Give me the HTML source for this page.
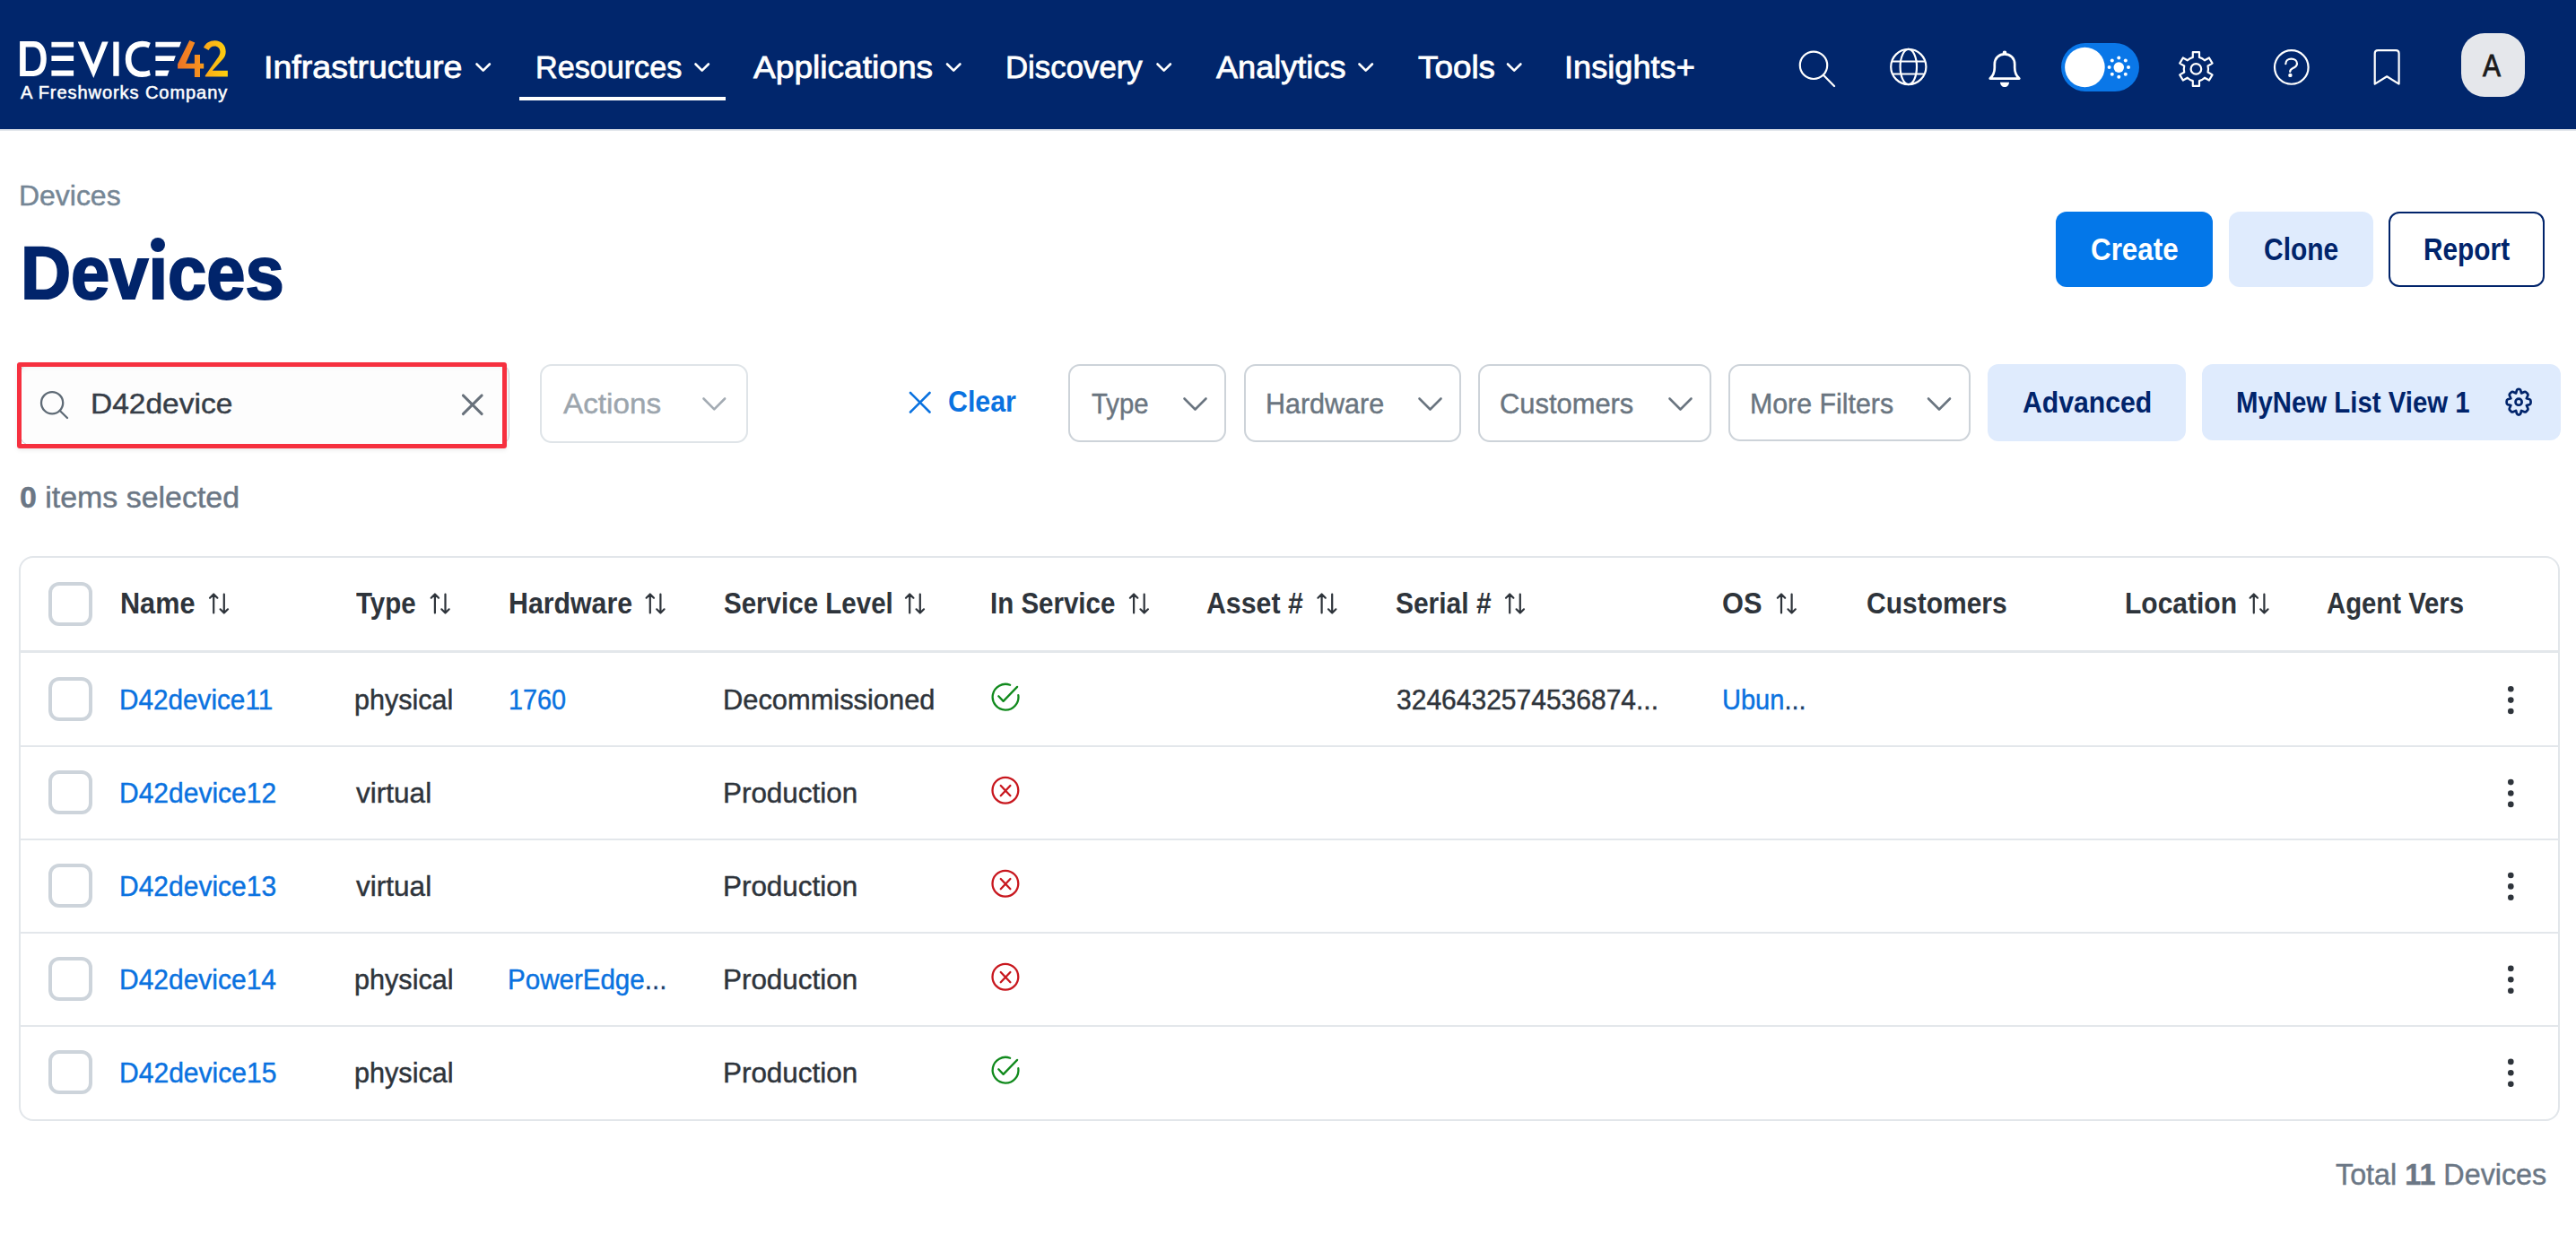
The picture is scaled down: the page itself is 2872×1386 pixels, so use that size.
<!DOCTYPE html>
<html><head><meta charset="utf-8"><title>Devices</title>
<style>
html,body{margin:0;padding:0;}
body{width:2872px;height:1386px;position:relative;overflow:hidden;background:#fff;font-family:"Liberation Sans",sans-serif;}
.t{position:absolute;white-space:nowrap;line-height:1;transform-origin:0 0;font-family:"Liberation Sans",sans-serif;}
.a{position:absolute;box-sizing:border-box;}
svg.a{overflow:visible;}
#nav{left:0;top:0;width:2872px;height:144px;background:#01266c;}
#navline{left:0;top:144px;width:2872px;height:2px;background:#e3e7ec;}
.ul{left:579px;top:108px;width:230px;height:4px;background:#fff;}
.btn{border-radius:12px;}
.dd{border:2px solid #cdd3d9;border-radius:13px;background:#fff;}
.cb{border:4px solid #cdd4db;border-radius:12px;width:49px;height:49px;left:54px;background:#fff;}
.hl{left:22px;width:2830px;height:2px;background:#e3e7eb;}
.dot{position:absolute;width:7px;height:7px;border-radius:50%;background:#2e343b;}

</style></head>
<body>
<div id="nav" class="a"></div>
<div id="navline" class="a"></div>
<!-- logo -->
<svg class="a" style="left:0;top:0" width="300" height="140" viewBox="0 0 300 140">
 <defs><linearGradient id="lg" x1="198" y1="0" x2="254" y2="0" gradientUnits="userSpaceOnUse"><stop offset="0" stop-color="#ee7325"/><stop offset="0.45" stop-color="#f6921f"/><stop offset="0.6" stop-color="#fbae18"/><stop offset="1" stop-color="#fdd10d"/></linearGradient></defs>
 <g fill="#fff">
  <path d="M22.1 46.1H37.5C46.5 46.1 51.8 53.5 51.8 65.5C51.8 77.5 46.5 84.9 37.5 84.9H22.1Z M28.7 52.4V78.9H37C42.5 78.9 45.4 73.6 45.4 65.6C45.4 57.6 42.5 52.4 37 52.4Z" fill-rule="evenodd"/>
  <rect x="57.4" y="46.8" width="24.7" height="5.8"/>
  <rect x="57.4" y="62.1" width="24.7" height="5.9"/>
  <rect x="57.4" y="78.5" width="24.7" height="6.2"/>
  <path d="M86.7 46.6H93.7L104.3 71.8L113.9 46.6H120.7L104.3 87Z"/>
  <rect x="126.3" y="46.6" width="6.3" height="38.2"/>
  <path d="M167.8 47.8C165 46.5 162 45.8 158.5 45.8C147 45.8 139.8 54 139.8 65.9C139.8 77.8 147 86 158.5 86C162 86 165 85.3 167.8 84.1L166.5 78.1C164.2 79.1 161.8 79.6 159.2 79.6C151.2 79.6 146.4 74.2 146.4 65.9C146.4 57.6 151.2 52.2 159.2 52.2C161.6 52.2 163.6 52.7 165.6 53.6Z"/>
  <path d="M173.4 46.8H202.1L200 52.6H173.4Z"/>
  <path d="M173.4 62.2H195.8L193.8 68H173.4Z"/>
  <path d="M173.4 78.6H188.7L186.5 84.7H173.4Z"/>
 </g>
 <g fill="url(#lg)">
  <path d="M211.3 45L217.3 47.6L207.1 70.8H216.9V61.1H223V70.8H227.2V76.6H223V85.9H216.9V76.6H198.1V71.6Z"/>
  <path d="M227 52.9C229.3 48 233.8 45.2 239.5 45.2C246.8 45.2 251.7 50.2 251.7 57.5C251.7 61 250.6 63.6 248.2 66.3L236.8 78.8H253.9V85.5H228.8V84.2L243.6 63.2C244.8 61.5 245.4 59.8 245.4 57.8C245.4 53.9 242.7 51.5 239.2 51.5C236 51.5 233.8 53.5 232.6 55.9Z"/>
 </g>
</svg>
<div class="a ul"></div>
<!-- nav chevrons -->
<svg class="a" style="left:0;top:0" width="1750" height="140">
 <g fill="none" stroke="#fff" stroke-width="2.6" stroke-linecap="round" stroke-linejoin="round">
  <path d="M531.5 71.5L538.7 78.7L545.9 71.5"/>
  <path d="M775.5 71.5L782.7 78.7L789.9 71.5"/>
  <path d="M1056 71.5L1063.2 78.7L1070.4 71.5"/>
  <path d="M1290.5 71.5L1297.7 78.7L1304.9 71.5"/>
  <path d="M1515.5 71.5L1522.7 78.7L1529.9 71.5"/>
  <path d="M1681 71.5L1688.2 78.7L1695.4 71.5"/>
 </g>
</svg>
<!-- nav icons -->
<svg class="a" style="left:1950px;top:0" width="922" height="144">
 <g fill="none" stroke="#fff" stroke-width="2.2" stroke-linecap="round" stroke-linejoin="round">
  <circle cx="72" cy="72.8" r="15.2"/>
  <path d="M83 83.8L95 96"/>
  <circle cx="177.8" cy="74.5" r="19.6"/>
  <ellipse cx="177.8" cy="74.5" rx="9.2" ry="19.6"/>
  <path d="M160.5 68.5H195.1M160.5 82.5H195.1"/>
  <path d="M268.7 87.6C271.5 85 273.8 81.5 273.8 75.5V71.5C273.8 64.8 278.5 60.4 285 60.4C291.5 60.4 296.2 64.8 296.2 71.5V75.5C296.2 81.5 298.5 85 301.3 87.6Z" stroke-width="2.7"/>
 </g>
 <path d="M280 91.8H290C290 94.8 287.8 97.1 285 97.1C282.2 97.1 280 94.8 280 91.8Z" fill="#fff"/>
 <circle cx="285" cy="58.8" r="2.3" fill="#fff"/>
 <rect x="348" y="48" width="87" height="54" rx="27" fill="#0a77e8"/>
 <circle cx="374.4" cy="75" r="22.3" fill="#fff"/>
 <g fill="#fff">
  <circle cx="412.3" cy="75.1" r="5.8"/>
  <circle cx="412.3" cy="64.5" r="2"/><circle cx="412.3" cy="85.8" r="2"/>
  <circle cx="401.6" cy="75.1" r="2"/><circle cx="423" cy="75.1" r="2"/>
  <circle cx="404.8" cy="67.5" r="2"/><circle cx="419.8" cy="67.5" r="2"/>
  <circle cx="404.8" cy="82.7" r="2"/><circle cx="419.8" cy="82.7" r="2"/>
 </g>
 <g fill="none" stroke="#fff" stroke-width="2.2" stroke-linecap="round" stroke-linejoin="round">
  <path d="M494.80 63.89L494.80 58.10 L502.00 58.10 L502.00 63.89A13.60 13.60 0 0 1 507.96 67.32L512.97 64.43 L516.57 70.67 L511.56 73.56A13.60 13.60 0 0 1 511.56 80.44L516.57 83.33 L512.97 89.57 L507.96 86.68A13.60 13.60 0 0 1 502.00 90.11L502.00 95.90 L494.80 95.90 L494.80 90.11A13.60 13.60 0 0 1 488.84 86.68L483.83 89.57 L480.23 83.33 L485.24 80.44A13.60 13.60 0 0 1 485.24 73.56L480.23 70.67 L483.83 64.43 L488.84 67.32A13.60 13.60 0 0 1 494.80 63.89 Z"/>
  <circle cx="498.4" cy="76.9" r="5.8"/>
  <circle cx="604.8" cy="74.95" r="18.8"/>
  <path d="M598.3 71.2C598.3 67.8 601 65.7 604.6 65.7C608.3 65.7 611 67.8 611 71C611 73.8 608.8 75 606 76.3C603.9 77.3 603.2 78.3 603.2 79.9"/>
  <path d="M697.7 93.6V59.6Q697.7 56.2 701.1 56.2H721.2Q724.6 56.2 724.6 59.6V93.6L711.15 85.3Z"/>
 </g>
 <circle cx="603.4" cy="83.9" r="2.2" fill="#fff"/>
 <rect x="794" y="37" width="71" height="71" rx="26" fill="#e5e7eb"/>
</svg>

<!-- header buttons -->
<div class="a btn" style="left:2292px;top:236px;width:175px;height:84px;background:#0377e9"></div>
<div class="a btn" style="left:2485px;top:236px;width:161px;height:84px;background:#dfebfd"></div>
<div class="a btn" style="left:2663px;top:236px;width:174px;height:84px;border:2.5px solid #01246b;background:#fff"></div>

<!-- search box -->
<div class="a" style="left:22px;top:405px;width:546px;height:92px;border-radius:12px;background:#fdfdfd;border:1.5px solid #c9d0d6;box-shadow:inset 0 8px 6px -6px rgba(40,60,80,0.10)"></div>
<div class="a" style="left:18.6px;top:403.8px;width:546px;height:96.5px;border:5.5px solid #f6303f;border-radius:3px;box-shadow:0 2px 5px rgba(0,0,0,0.08)"></div>
<svg class="a" style="left:0;top:390px" width="600" height="120">
 <g fill="none" stroke="#5f6b76" stroke-width="2.3" stroke-linecap="round">
  <circle cx="58.1" cy="59.2" r="12.1"/>
  <path d="M66.8 68L75 76"/>
 </g>
 <g fill="none" stroke="#68717b" stroke-width="2.9" stroke-linecap="round">
  <path d="M516.3 50.9L537.2 71.6M537.2 50.9L516.3 71.6"/>
 </g>
</svg>
<!-- actions dropdown etc -->
<div class="a dd" style="left:602px;top:406px;width:232px;height:88px;border-color:#dfe4e8"></div>
<div class="a dd" style="left:1191px;top:406px;width:176px;height:87px"></div>
<div class="a dd" style="left:1387px;top:406px;width:242px;height:87px"></div>
<div class="a dd" style="left:1648px;top:406px;width:260px;height:87px"></div>
<div class="a dd" style="left:1927px;top:406px;width:270px;height:86px"></div>
<div class="a btn" style="left:2216px;top:406px;width:221px;height:86px;background:#dfebfd"></div>
<div class="a btn" style="left:2455px;top:406px;width:400px;height:85px;background:#dfebfd"></div>
<svg class="a" style="left:0;top:390px" width="2872" height="120">
 <g fill="none" stroke-width="2.6" stroke-linecap="round" stroke-linejoin="round">
  <path d="M784.5 54.5L796.3 66.3L808.1 54.5" stroke="#a3abb3"/>
  <path d="M1320.5 54.5L1332.5 66.5L1344.5 54.5" stroke="#6a7580"/>
  <path d="M1582.5 54.5L1594.5 66.5L1606.5 54.5" stroke="#6a7580"/>
  <path d="M1861.5 54.5L1873.5 66.5L1885.5 54.5" stroke="#6a7580"/>
  <path d="M2150 54.5L2162 66.5L2174 54.5" stroke="#6a7580"/>
  <path d="M1015 48L1036.5 69.5M1036.5 48L1015 69.5" stroke="#0a72e0"/>
 </g>
 <g fill="none" stroke="#01246b" stroke-width="2.6" stroke-linecap="round" stroke-linejoin="round" transform="translate(2808.1 58.2) scale(1.04) translate(-2807.2 -58.4)">
  <path d="M2805.2 45.7C2805.5 44.9 2806.2 44.5 2807.2 44.5S2808.9 44.9 2809.2 45.7L2810.1 49L2813.2 47.6C2814 47.3 2814.7 47.5 2815.4 48.2L2816.5 49.3C2817.2 50 2817.3 50.8 2817 51.5L2815.6 54.6L2818.9 55.5C2819.7 55.8 2820.1 56.5 2820.1 57.5V59.3C2820.1 60.3 2819.7 60.9 2818.9 61.2L2815.6 62.1L2817 65.2C2817.3 65.9 2817.2 66.7 2816.5 67.4L2815.4 68.5C2814.7 69.2 2814 69.4 2813.2 69.1L2810.1 67.7L2809.2 71C2808.9 71.8 2808.2 72.2 2807.2 72.2S2805.5 71.8 2805.2 71L2804.3 67.7L2801.2 69.1C2800.4 69.4 2799.7 69.2 2799 68.5L2797.9 67.4C2797.2 66.7 2797.1 65.9 2797.4 65.2L2798.8 62.1L2795.5 61.2C2794.7 60.9 2794.3 60.3 2794.3 59.3V57.5C2794.3 56.5 2794.7 55.8 2795.5 55.5L2798.8 54.6L2797.4 51.5C2797.1 50.8 2797.2 50 2797.9 49.3L2799 48.2C2799.7 47.5 2800.4 47.3 2801.2 47.6L2804.3 49Z"/>
  <circle cx="2807.2" cy="58.4" r="3.4"/>
 </g>
</svg>

<!-- table -->
<div class="a" style="left:21px;top:620px;width:2833px;height:630px;border:2px solid #e2e6ea;border-radius:16px;"></div>
<div class="a hl" style="top:725px;height:2.5px"></div>
<div class="a hl" style="top:830.5px"></div>
<div class="a hl" style="top:934.5px"></div>
<div class="a hl" style="top:1038.5px"></div>
<div class="a hl" style="top:1142.5px"></div>
<div class="a cb" style="top:649px"></div>
<div class="a cb" style="top:755px"></div>
<div class="a cb" style="top:859px"></div>
<div class="a cb" style="top:963px"></div>
<div class="a cb" style="top:1067px"></div>
<div class="a cb" style="top:1171px"></div>
<svg class="a" style="left:0;top:600px" width="2872" height="700">
 <g fill="none" stroke="#2e343b" stroke-width="2.2" stroke-linecap="round" stroke-linejoin="round">
  <g id="sort"><path d="M238.2 62.5V83.5M234 66.7L238.2 62.5L242.4 66.7M249.8 62.5V83.5M245.6 79.3L249.8 83.5L254 79.3"/></g>
  <use href="#sort" x="246.7"/>
  <use href="#sort" x="486.6"/>
  <use href="#sort" x="776"/>
  <use href="#sort" x="1025.9"/>
  <use href="#sort" x="1235.4"/>
  <use href="#sort" x="1445"/>
  <use href="#sort" x="1747.8"/>
  <use href="#sort" x="2274.6"/>
 </g>
</svg>
<svg class="a" style="left:0;top:0" width="2872" height="1386">
 <defs>
  <g id="ok" fill="none" stroke="#118a1d" stroke-width="2.3" stroke-linecap="round" stroke-linejoin="round">
   <path d="M31.1 13.75A14.4 14.4 0 1 0 40.3 25.1"/>
   <path d="M18.3 26.3L23.6 31.9L39.1 15.9"/>
  </g>
  <g id="no" fill="none" stroke="#c8171e" stroke-width="2.3" stroke-linecap="round">
   <circle cx="25.9" cy="31.2" r="14.4"/>
   <path d="M20.75 26L31.4 37.2M31.4 26L20.75 37.2"/>
  </g>
  <g id="keb" fill="#2e343b"><circle cx="0" cy="-12.4" r="3.3"/><circle cx="0" cy="0" r="3.3"/><circle cx="0" cy="12.4" r="3.3"/></g>
 </defs>
 <use href="#ok" x="1095" y="750"/>
 <use href="#no" x="1095" y="850"/>
 <use href="#no" x="1095" y="954"/>
 <use href="#no" x="1095" y="1058"/>
 <use href="#ok" x="1095" y="1166"/>
 <use href="#keb" x="2799.3" y="780.6"/>
 <use href="#keb" x="2799.3" y="884.5"/>
 <use href="#keb" x="2799.3" y="988.4"/>
 <use href="#keb" x="2799.3" y="1092.3"/>
 <use href="#keb" x="2799.3" y="1196.3"/>
</svg>

<div class="t" style="left:294.19px;top:56.81px;font-size:35.17px;font-weight:400;color:#fff;transform:scaleX(1.0685);-webkit-text-stroke:0.8px #fff">Infrastructure</div>
<div class="t" style="left:597.06px;top:56.81px;font-size:35.17px;font-weight:400;color:#fff;transform:scaleX(0.9715);-webkit-text-stroke:0.8px #fff">Resources</div>
<div class="t" style="left:840.10px;top:56.81px;font-size:35.17px;font-weight:400;color:#fff;transform:scaleX(1.0556);-webkit-text-stroke:0.8px #fff">Applications</div>
<div class="t" style="left:1121.12px;top:56.81px;font-size:35.17px;font-weight:400;color:#fff;transform:scaleX(0.9895);-webkit-text-stroke:0.8px #fff">Discovery</div>
<div class="t" style="left:1355.90px;top:56.81px;font-size:35.17px;font-weight:400;color:#fff;transform:scaleX(1.0271);-webkit-text-stroke:0.8px #fff">Analytics</div>
<div class="t" style="left:1580.80px;top:56.81px;font-size:35.17px;font-weight:400;color:#fff;transform:scaleX(1.0481);-webkit-text-stroke:0.8px #fff">Tools</div>
<div class="t" style="left:1743.71px;top:56.81px;font-size:35.17px;font-weight:400;color:#fff;transform:scaleX(1.0290);-webkit-text-stroke:0.8px #fff">Insights+</div>
<div class="t" style="left:22.80px;top:94.45px;font-size:19.48px;font-weight:400;color:#fff;transform:scaleX(1.0290);-webkit-text-stroke:0.5px #fff;letter-spacing:0.9px">A Freshworks Company</div>
<div class="t" style="left:2768.30px;top:54.83px;font-size:35.32px;font-weight:400;color:#1c1c1c;transform:scaleX(0.8500);-webkit-text-stroke:0.9px #1c1c1c">A</div>
<div class="t" style="left:21.11px;top:201.81px;font-size:32.19px;font-weight:400;color:#758695;transform:scaleX(0.9929);-webkit-text-stroke:0.45px #758695">Devices</div>
<div class="t" style="left:22.64px;top:262.97px;font-size:82.56px;font-weight:700;color:#01246b;transform:scaleX(0.9412);-webkit-text-stroke:2.0px #01246b">Devices</div>
<div class="t" style="left:2331.09px;top:260.55px;font-size:34.3px;font-weight:700;color:#fff;transform:scaleX(0.9143)">Create</div>
<div class="t" style="left:2524.13px;top:260.55px;font-size:34.3px;font-weight:700;color:#01246b;transform:scaleX(0.8731)">Clone</div>
<div class="t" style="left:2702.06px;top:260.55px;font-size:34.3px;font-weight:700;color:#01246b;transform:scaleX(0.8694)">Report</div>
<div class="t" style="left:100.79px;top:434.87px;font-size:31.76px;font-weight:400;color:#363d47;transform:scaleX(1.0551);-webkit-text-stroke:0.45px #363d47">D42device</div>
<div class="t" style="left:627.70px;top:434.01px;font-size:32.19px;font-weight:400;color:#9ca5ad;transform:scaleX(1.0333);-webkit-text-stroke:0.45px #9ca5ad">Actions</div>
<div class="t" style="left:1056.78px;top:432.18px;font-size:32.85px;font-weight:700;color:#0a72e0;transform:scaleX(0.9247)">Clear</div>
<div class="t" style="left:1216.50px;top:434.01px;font-size:32.19px;font-weight:400;color:#6a7580;transform:scaleX(0.9101);-webkit-text-stroke:0.45px #6a7580">Type</div>
<div class="t" style="left:1410.61px;top:434.01px;font-size:32.19px;font-weight:400;color:#6a7580;transform:scaleX(0.9471);-webkit-text-stroke:0.45px #6a7580">Hardware</div>
<div class="t" style="left:1672.44px;top:434.01px;font-size:32.19px;font-weight:400;color:#6a7580;transform:scaleX(0.9597);-webkit-text-stroke:0.45px #6a7580">Customers</div>
<div class="t" style="left:1950.91px;top:434.01px;font-size:32.19px;font-weight:400;color:#6a7580;transform:scaleX(0.9425);-webkit-text-stroke:0.45px #6a7580">More Filters</div>
<div class="t" style="left:2254.88px;top:432.78px;font-size:32.85px;font-weight:700;color:#01246b;transform:scaleX(0.9195)">Advanced</div>
<div class="t" style="left:2492.51px;top:432.78px;font-size:32.85px;font-weight:700;color:#01246b;transform:scaleX(0.8948)">MyNew List View 1</div>
<div class="t" style="left:21.67px;top:538.36px;font-size:33.07px;font-weight:400;color:#6b7785;transform:scaleX(1.0258);-webkit-text-stroke:0.45px #6b7785"><b>0</b> items selected</div>
<div class="t" style="left:134.44px;top:655.96px;font-size:32.99px;font-weight:700;color:#2e343b;transform:scaleX(0.9287)">Name</div>
<div class="t" style="left:397.10px;top:655.96px;font-size:32.99px;font-weight:700;color:#2e343b;transform:scaleX(0.8946)">Type</div>
<div class="t" style="left:566.86px;top:655.96px;font-size:32.99px;font-weight:700;color:#2e343b;transform:scaleX(0.9184)">Hardware</div>
<div class="t" style="left:806.90px;top:655.96px;font-size:32.99px;font-weight:700;color:#2e343b;transform:scaleX(0.8952)">Service Level</div>
<div class="t" style="left:1103.91px;top:655.96px;font-size:32.99px;font-weight:700;color:#2e343b;transform:scaleX(0.8941)">In Service</div>
<div class="t" style="left:1345.08px;top:655.96px;font-size:32.99px;font-weight:700;color:#2e343b;transform:scaleX(0.9181)">Asset #</div>
<div class="t" style="left:1555.89px;top:655.96px;font-size:32.99px;font-weight:700;color:#2e343b;transform:scaleX(0.9078)">Serial #</div>
<div class="t" style="left:1920.07px;top:655.96px;font-size:32.99px;font-weight:700;color:#2e343b;transform:scaleX(0.9326)">OS</div>
<div class="t" style="left:2080.79px;top:655.96px;font-size:32.99px;font-weight:700;color:#2e343b;transform:scaleX(0.9094)">Customers</div>
<div class="t" style="left:2368.68px;top:655.96px;font-size:32.99px;font-weight:700;color:#2e343b;transform:scaleX(0.9098)">Location</div>
<div class="t" style="left:2594.41px;top:655.96px;font-size:32.99px;font-weight:700;color:#2e343b;transform:scaleX(0.8882)">Agent Vers</div>
<div class="t" style="left:133.35px;top:763.83px;font-size:32.05px;font-weight:400;color:#0a72e0;transform:scaleX(0.9271);-webkit-text-stroke:0.45px #0a72e0">D42device11</div>
<div class="t" style="left:395.09px;top:763.83px;font-size:32.05px;font-weight:400;color:#2e343b;transform:scaleX(0.9536);-webkit-text-stroke:0.45px #2e343b">physical</div>
<div class="t" style="left:566.90px;top:763.83px;font-size:32.05px;font-weight:400;color:#0a72e0;transform:scaleX(0.8985);-webkit-text-stroke:0.45px #0a72e0">1760</div>
<div class="t" style="left:805.88px;top:763.83px;font-size:32.05px;font-weight:400;color:#2e343b;transform:scaleX(0.9620);-webkit-text-stroke:0.45px #2e343b">Decommissioned</div>
<div class="t" style="left:133.33px;top:867.83px;font-size:32.05px;font-weight:400;color:#0a72e0;transform:scaleX(0.9359);-webkit-text-stroke:0.45px #0a72e0">D42device12</div>
<div class="t" style="left:397.00px;top:867.83px;font-size:32.05px;font-weight:400;color:#2e343b;transform:scaleX(0.9845);-webkit-text-stroke:0.45px #2e343b">virtual</div>
<div class="t" style="left:805.84px;top:867.83px;font-size:32.05px;font-weight:400;color:#2e343b;transform:scaleX(0.9800);-webkit-text-stroke:0.45px #2e343b">Production</div>
<div class="t" style="left:133.33px;top:971.63px;font-size:32.05px;font-weight:400;color:#0a72e0;transform:scaleX(0.9359);-webkit-text-stroke:0.45px #0a72e0">D42device13</div>
<div class="t" style="left:397.00px;top:971.63px;font-size:32.05px;font-weight:400;color:#2e343b;transform:scaleX(0.9845);-webkit-text-stroke:0.45px #2e343b">virtual</div>
<div class="t" style="left:805.84px;top:971.63px;font-size:32.05px;font-weight:400;color:#2e343b;transform:scaleX(0.9800);-webkit-text-stroke:0.45px #2e343b">Production</div>
<div class="t" style="left:133.33px;top:1075.53px;font-size:32.05px;font-weight:400;color:#0a72e0;transform:scaleX(0.9357);-webkit-text-stroke:0.45px #0a72e0">D42device14</div>
<div class="t" style="left:395.09px;top:1075.53px;font-size:32.05px;font-weight:400;color:#2e343b;transform:scaleX(0.9554);-webkit-text-stroke:0.45px #2e343b">physical</div>
<div class="t" style="left:566.36px;top:1075.53px;font-size:32.05px;font-weight:400;color:#0a72e0;transform:scaleX(0.9218);-webkit-text-stroke:0.45px #0a72e0">PowerEdge<span style="color:#2e343b">...</span></div>
<div class="t" style="left:805.84px;top:1075.53px;font-size:32.05px;font-weight:400;color:#2e343b;transform:scaleX(0.9800);-webkit-text-stroke:0.45px #2e343b">Production</div>
<div class="t" style="left:133.32px;top:1179.83px;font-size:32.05px;font-weight:400;color:#0a72e0;transform:scaleX(0.9380);-webkit-text-stroke:0.45px #0a72e0">D42device15</div>
<div class="t" style="left:395.09px;top:1179.83px;font-size:32.05px;font-weight:400;color:#2e343b;transform:scaleX(0.9554);-webkit-text-stroke:0.45px #2e343b">physical</div>
<div class="t" style="left:805.84px;top:1179.83px;font-size:32.05px;font-weight:400;color:#2e343b;transform:scaleX(0.9800);-webkit-text-stroke:0.45px #2e343b">Production</div>
<div class="t" style="left:1556.96px;top:763.63px;font-size:32.05px;font-weight:400;color:#2e343b;transform:scaleX(0.9364);-webkit-text-stroke:0.45px #2e343b">3246432574536874...</div>
<div class="t" style="left:1920.19px;top:763.63px;font-size:32.05px;font-weight:400;color:#0a72e0;transform:scaleX(0.9061);-webkit-text-stroke:0.45px #0a72e0">Ubun<span style="color:#2e343b">...</span></div>
<div class="t" style="left:2603.70px;top:1292.80px;font-size:33.5px;font-weight:400;color:#6b7785;transform:scaleX(0.9642);-webkit-text-stroke:0.45px #6b7785">Total <b>11</b> Devices</div>
<div class="a" style="left:167px;top:268px;width:17px;height:16px;background:#fff"></div>
<div class="a" style="left:168px;top:264.8px;width:16.4px;height:16.4px;border-radius:50%;background:#01246b"></div>

</body></html>
